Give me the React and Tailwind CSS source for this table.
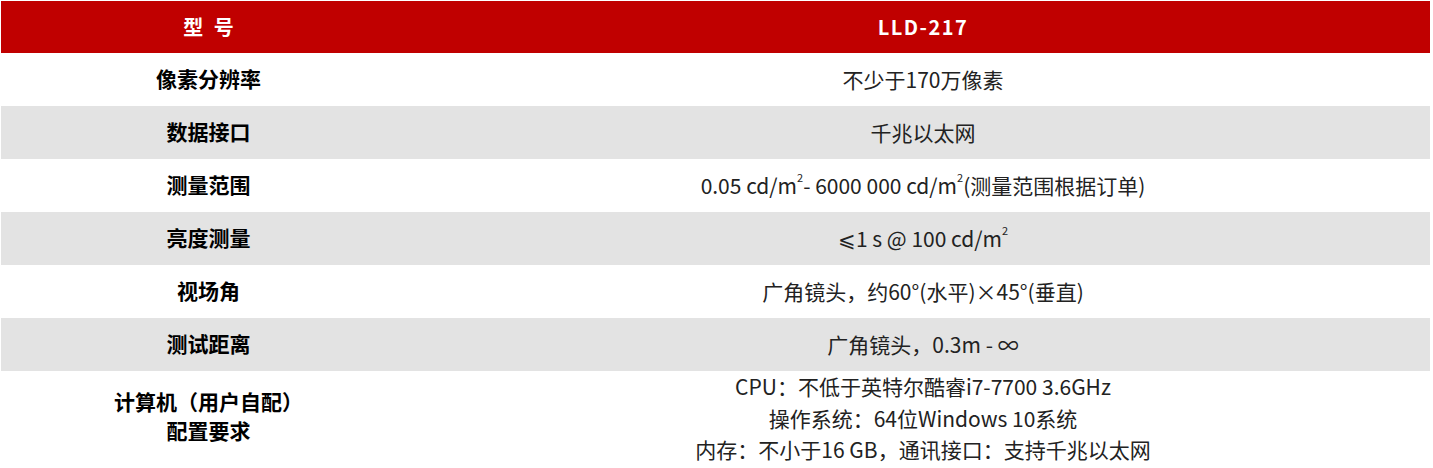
import React from "react";

const font = { fontFamily: '"Noto Sans CJK SC", "Noto Sans", sans-serif' };

function Sup() {
  return <sup className="text-[11px] relative top-[-4px] align-super leading-none">2</sup>;
}

const rows = [
  { label: "像素分辨率", value: "不少于170万像素" },
  { label: "数据接口", value: "千兆以太网" },
  {
    label: "测量范围",
    value: (
      <>
        0.05 cd/m<Sup />- 6000 000 cd/m<Sup />(测量范围根据订单)
      </>
    ),
  },
  {
    label: "亮度测量",
    value: (
      <>
        ⩽1 s @ 100 cd/m<Sup />
      </>
    ),
  },
  { label: "视场角", value: "广角镜头，约60°(水平)×45°(垂直)" },
  { label: "测试距离", value: "广角镜头，0.3m - ∞" },
];

export default function App() {
  return (
    <div className="w-[1433px] h-[468px] bg-white overflow-hidden" style={font}>
      <div className="ml-[1px] mt-[1px] w-[1429px]">
        <div className="grid grid-cols-[415px_1fr] h-[52px] bg-[#c00000] text-white font-bold">
          <div className="flex items-center justify-center text-[20px] [word-spacing:6px]">型 号</div>
          <div className="flex items-center justify-center text-[20px] tracking-[1.5px]">LLD-217</div>
        </div>
        {rows.map((r, i) => (
          <div
            key={i}
            className={`grid grid-cols-[415px_1fr] h-[53px] ${i % 2 === 1 ? "bg-[#e3e3e3]" : "bg-white"}`}
          >
            <div className="flex items-center justify-center text-[21px] font-bold text-black pb-[1px]">{r.label}</div>
            <div className="flex items-center justify-center text-[21px] text-[#222]">
              <span>{r.value}</span>
            </div>
          </div>
        ))}
        <div className="grid grid-cols-[415px_1fr] h-[97px] bg-white">
          <div className="flex flex-col items-center justify-center text-[21px] font-bold text-black leading-[29px] pb-[8px]">
            <div>计算机（用户自配）</div>
            <div>配置要求</div>
          </div>
          <div className="flex flex-col items-center justify-center text-[21px] text-[#222] leading-[31.5px] -mt-[2px]">
            <div>CPU：不低于英特尔酷睿i7-7700 3.6GHz</div>
            <div>操作系统：64位Windows 10系统</div>
            <div>内存：不小于16 GB，通讯接口：支持千兆以太网</div>
          </div>
        </div>
      </div>
    </div>
  );
}
